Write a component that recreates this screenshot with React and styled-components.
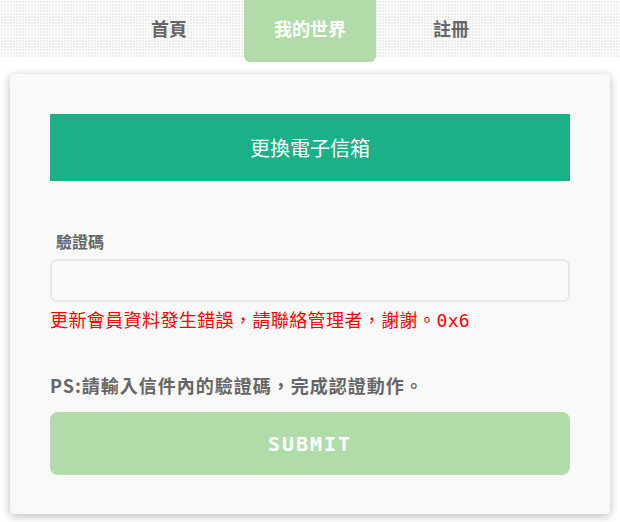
import styled, { createGlobalStyle } from "styled-components";

const Global = createGlobalStyle`
  body {
    margin: 0;
    background: #fff;
    font-family: "Liberation Sans", "Noto Sans CJK TC", sans-serif;
  }
`;

const NavBar = styled.nav`
  height: 57px;
  background-color: #ececec;
  background-image:
    linear-gradient(to right, #fff 1px, transparent 1px),
    linear-gradient(to bottom, #fff 1px, transparent 1px);
  background-size: 3px 3px;
  display: flex;
  justify-content: center;
  gap: 9px;
`;

const Tab = styled.a`
  width: 132px;
  height: 62px;
  line-height: 56px;
  text-align: center;
  font-family: "Noto Sans CJK TC", sans-serif;
  font-size: 18px;
  font-weight: 700;
  color: ${(p) => (p.active ? "#fff" : "#666")};
  background: ${(p) => (p.active ? "#b1dcaa" : "transparent")};
  border-radius: 0 0 6px 6px;
  text-decoration: none;
  position: relative;
  z-index: 1;
`;

const Card = styled.main`
  margin: 17px 10px 8px;
  padding: 40px 40px 39px;
  background: #f9f9f9;
  border-radius: 4px;
  box-shadow: 0 2px 10px rgba(0, 0, 0, 0.28);
`;

const Banner = styled.h1`
  margin: 0;
  height: 67px;
  background: #1bb188;
  color: #fff;
  font-family: "Noto Sans CJK TC", sans-serif;
  font-size: 20px;
  font-weight: 400;
  display: flex;
  align-items: center;
  justify-content: center;
`;

const Label = styled.label`
  display: block;
  margin: 49px 0 0 6px;
  font-family: "Noto Sans CJK TC", sans-serif;
  font-size: 16px;
  font-weight: 700;
  color: #666;
  line-height: 22px;
`;

const Input = styled.input`
  display: block;
  box-sizing: border-box;
  width: 100%;
  height: 43px;
  margin-top: 7px;
  background: #fafafa;
  border: 2px solid #e8e8e8;
  border-radius: 7px;
  outline: none;
`;

const ErrorText = styled.p`
  margin: 6px 0 0;
  color: #ff0000;
  font-family: "DejaVu Sans Mono", "Noto Sans CJK TC", monospace;
  font-size: 18px;
  letter-spacing: 0.4px;
  line-height: 26px;
`;

const Hint = styled.p`
  margin: 38px 0 0;
  color: #666;
  font-family: "Noto Sans CJK TC", sans-serif;
  font-size: 18px;
  font-weight: 700;
  letter-spacing: 1px;
  line-height: 26px;
`;

const Submit = styled.button`
  display: block;
  width: 100%;
  height: 63px;
  margin-top: 14px;
  border: none;
  border-radius: 8px;
  background: #b1dcaa;
  color: #fff;
  font-family: "DejaVu Sans Mono", monospace;
  font-size: 20px;
  font-weight: 700;
  letter-spacing: 2px;
  cursor: pointer;
`;

export default function App() {
  return (
    <>
      <Global />
      <NavBar>
        <Tab href="#">首頁</Tab>
        <Tab href="#" active>我的世界</Tab>
        <Tab href="#">註冊</Tab>
      </NavBar>
      <Card>
        <Banner>更換電子信箱</Banner>
        <Label htmlFor="code">驗證碼</Label>
        <Input id="code" type="text" />
        <ErrorText>更新會員資料發生錯誤，請聯絡管理者，謝謝。0x6</ErrorText>
        <Hint>PS:請輸入信件內的驗證碼，完成認證動作。</Hint>
        <Submit>SUBMIT</Submit>
      </Card>
    </>
  );
}
